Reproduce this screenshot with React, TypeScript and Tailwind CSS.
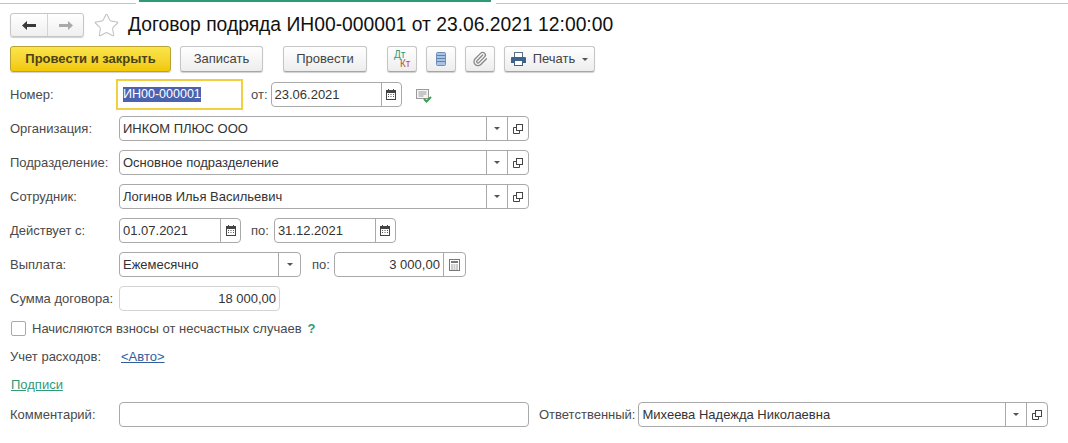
import { Star, Paperclip } from "lucide-react";
import type { ReactNode } from "react";

const labelCls = "text-[#4a4a4a] text-[13px] whitespace-nowrap";
const fieldBorder = "border border-[#a9a9a9] rounded-[4px] bg-white";

function Caret() {
  return <span className="w-0 h-0 border-x-[3px] border-x-transparent border-t-[3px] border-t-[#555]" />;
}

function OpenIcon() {
  return (
    <svg width="12" height="12" viewBox="0 0 12 12" fill="none" stroke="#444" strokeWidth="1">
      <rect x="4.5" y="1.5" width="6" height="6" />
      <path d="M4.5 4.5H1.5V10.5H7.5V7.5" />
    </svg>
  );
}

function CalendarIcon() {
  return (
    <svg width="10" height="11" viewBox="0 0 10 11">
      <rect x="0.5" y="1.5" width="9" height="9" fill="#fff" stroke="#444" />
      <rect x="0" y="1" width="10" height="3" fill="#444" />
      <rect x="2" y="0" width="1" height="2" fill="#444" />
      <rect x="7" y="0" width="1" height="2" fill="#444" />
      <path d="M2 5.5h1M4.5 5.5h1M7 5.5h1M2 7.5h1M4.5 7.5h1M7 7.5h1" stroke="#555" />
    </svg>
  );
}

function CalcIcon() {
  return (
    <svg width="11" height="12" viewBox="0 0 11 12">
      <rect x="0.5" y="0.5" width="10" height="11" fill="#fff" stroke="#777" />
      <rect x="2" y="2" width="7" height="2" fill="#777" />
      <path d="M2 6h2M4.5 6h2M7 6h2M2 8h2M4.5 8h2M7 8h2M2 10h2M4.5 10h2M7 10h2" stroke="#999" />
    </svg>
  );
}

function PrinterIcon() {
  return (
    <svg width="15" height="14" viewBox="0 0 15 14">
      <rect x="3.5" y="0.5" width="8" height="5" fill="#fff" stroke="#5b6f86" />
      <path d="M1 5h13a1 1 0 0 1 1 1v5h-3V8H3v3H0V6a1 1 0 0 1 1-1z" fill="#3f6288" />
      <rect x="3.5" y="8.5" width="8" height="5" fill="#fff" stroke="#3f6288" />
    </svg>
  );
}

function Arrow({ color, flip }: { color: string; flip?: boolean }) {
  return (
    <svg width="14" height="9" viewBox="0 0 14 9" className={flip ? "-scale-x-100" : ""}>
      <path d="M0 4.5 5 0v3h9v3H5v3z" fill={color} />
    </svg>
  );
}

function Field({ width, value, right, buttons, light, btn = "w-[21px]" }: { width: string; value: string; right?: boolean; buttons?: ReactNode[]; light?: boolean; btn?: string }) {
  return (
    <div className={`${width} h-[25px] flex shrink-0 ${fieldBorder} ${light ? "border-[#d4d4d4]" : ""}`}>
      <div className={`flex-1 min-w-0 px-[3px] leading-[23px] text-[13px] text-[#333] whitespace-pre ${right ? "text-right" : ""}`}>{value}</div>
      {buttons?.map((b, i) => (
        <div key={i} className={`${btn} flex items-center justify-center border-l border-[#a9a9a9]`}>
          {b}
        </div>
      ))}
    </div>
  );
}

function ToolButton({ children, className }: { children: ReactNode; className: string }) {
  return (
    <div className={`h-[26px] flex items-center justify-center border border-[#c6c6c6] border-b-[#a5a5a5] rounded-[3px] bg-gradient-to-b from-white to-[#ededed] text-[13px] text-[#444] shadow-[0_1px_1px_#d0d0d0] ${className}`}>
      {children}
    </div>
  );
}

function Row({ label, children, className }: { label: string; children: ReactNode; className: string }) {
  return (
    <div className={`flex items-center pl-[10px] ${className}`}>
      <div className={`${labelCls} w-[109px] shrink-0`}>{label}</div>
      {children}
    </div>
  );
}

export default function App() {
  const combo = [<Caret key="c" />, <OpenIcon key="o" />];

  return (
    <div className="w-[1068px] h-[443px] overflow-hidden bg-white font-['Liberation_Sans',Arial,sans-serif]">
      <div className="h-[4px] flex">
        <div className="w-[136px] border-b border-[#c4c4c4]" />
        <div className="w-[352px] h-[2px] bg-[#2f9a78] ml-[3px]" />
        <div className="flex-1 border-b border-[#c4c4c4] ml-[5px]" />
      </div>

      <div className="flex items-center pl-[10px] mt-[9px] h-[24px]">
        <div className="w-[74px] h-[24px] flex border border-[#c6c6c6] rounded-[3px] bg-gradient-to-b from-white to-[#efefef] shadow-[0_1px_1px_#d0d0d0]">
          <div className="w-[37px] flex items-center justify-center border-r border-[#d4d4d4]">
            <Arrow color="#3a3a3a" />
          </div>
          <div className="flex-1 flex items-center justify-center">
            <Arrow color="#aaaaaa" flip />
          </div>
        </div>
        <Star size={27} strokeWidth={1} color="#c4c4c4" className="ml-[9px]" />
        <div className="ml-[8px] text-[19.3px] text-[#111] whitespace-nowrap">Договор подряда ИН00-000001 от 23.06.2021 12:00:00</div>
      </div>

      <div className="flex items-center pl-[10px] mt-[9px] h-[26px]">
        <div className="w-[161px] h-[26px] flex items-center justify-center rounded-[3px] border border-[#b8a233] bg-gradient-to-b from-[#fbe54a] to-[#f2c800] text-[13px] font-bold text-[#4a4216] shadow-[0_1px_1px_#d0d0d0]">
          Провести и закрыть
        </div>
        <ToolButton className="w-[83px] ml-[9px]">Записать</ToolButton>
        <ToolButton className="w-[84px] ml-[20px]">Провести</ToolButton>
        <ToolButton className="w-[30px] ml-[20px]">
          <span className="relative block w-[20px] h-[18px] text-[10px] leading-[9px]">
            <span className="absolute left-[2px] top-0 text-[#2f9a78]">Дт</span>
            <span className="absolute left-[8px] top-[9px] text-[#c0504d]">Кт</span>
          </span>
        </ToolButton>
        <ToolButton className="w-[30px] ml-[9px]">
          <svg width="10" height="14" viewBox="0 0 10 14">
            <rect x="0.5" y="0.5" width="9" height="13" rx="1" fill="#a9c3e4" stroke="#6f8fb8" />
            <path d="M1 3.5h8M1 6.5h8M1 9.5h8" stroke="#5f81ad" />
          </svg>
        </ToolButton>
        <ToolButton className="w-[30px] ml-[9px]">
          <Paperclip size={16} strokeWidth={2} color="#8a8a8a" />
        </ToolButton>
        <ToolButton className="w-[91px] ml-[9px] gap-[7px]">
          <PrinterIcon />
          <span>Печать</span>
          <Caret />
        </ToolButton>
      </div>

      <Row label="Номер:" className="mt-[7px] h-[31px]">
        <div className="-ml-[3px] w-[127px] h-[31px] border-[2px] border-[#f0d040] px-[5px] flex items-center">
          <span className="bg-[#4a62b0] text-white text-[12.5px] leading-[15px]">ИН00-000001</span>
        </div>
        <span className={`${labelCls} ml-[8px]`}>от:</span>
        <Field width="w-[131px] ml-[3px]" value="23.06.2021" btn="w-[20px]" buttons={[<CalendarIcon key="c" />]} />
        <svg width="16" height="14" viewBox="0 0 16 14" className="ml-[14px] mt-[2px]">
          <rect x="0.5" y="0.5" width="12" height="9" fill="#f4f4f4" stroke="#9a9a9a" />
          <path d="M2.5 3h8M2.5 5h8M2.5 7h5" stroke="#9a9a9a" />
          <path d="M8 10l2.5 2.5L15 8" fill="none" stroke="#3f9e4d" strokeWidth="2" />
        </svg>
      </Row>

      <Row label="Организация:" className="mt-[6px] h-[25px]">
        <Field width="w-[410px]" value="ИНКОМ ПЛЮС ООО" buttons={combo} />
      </Row>
      <Row label="Подразделение:" className="mt-[9px] h-[25px]">
        <Field width="w-[410px]" value="Основное подразделение" buttons={combo} />
      </Row>
      <Row label="Сотрудник:" className="mt-[9px] h-[25px]">
        <Field width="w-[410px]" value="Логинов Илья Васильевич" buttons={combo} />
      </Row>

      <Row label="Действует с:" className="mt-[9px] h-[25px]">
        <Field width="w-[122px]" value="01.07.2021" btn="w-[20px]" buttons={[<CalendarIcon key="c" />]} />
        <span className={`${labelCls} ml-[10px]`}>по:</span>
        <Field width="w-[122px] ml-[5px]" value="31.12.2021" btn="w-[20px]" buttons={[<CalendarIcon key="c" />]} />
      </Row>

      <Row label="Выплата:" className="mt-[9px] h-[25px]">
        <Field width="w-[182px]" value="Ежемесячно" btn="w-[22px]" buttons={[<Caret key="c" />]} />
        <span className={`${labelCls} ml-[11px]`}>по:</span>
        <Field width="w-[132px] ml-[4px]" value="3 000,00" right btn="w-[22px]" buttons={[<CalcIcon key="c" />]} />
      </Row>

      <Row label="Сумма договора:" className="mt-[9px] h-[25px]">
        <Field width="w-[161px]" value="18 000,00" right light />
      </Row>

      <div className="flex items-center pl-[11px] mt-[5px] h-[25px]">
        <span className="w-[15px] h-[15px] border border-[#a9a9a9] rounded-[2px] bg-white" />
        <span className={`${labelCls} ml-[6px]`}>Начисляются взносы от несчастных случаев</span>
        <span className="ml-[6px] text-[13px] font-bold text-[#2f9a78]">?</span>
      </div>

      <Row label="Учет расходов:" className="mt-[3px] h-[25px]">
        <span className="ml-[2px] text-[13px] text-[#2f5d9e] underline">&lt;Авто&gt;</span>
      </Row>

      <div className="pl-[11px] mt-[3px] h-[25px] leading-[25px] text-[13px] text-[#2f9a78] underline">Подписи</div>

      <Row label="Комментарий:" className="mt-[5px] h-[25px]">
        <Field width="w-[410px]" value="" />
        <span className={`${labelCls} ml-[10px]`}>Ответственный:</span>
        <Field width="w-[410px] ml-[3px]" value="Михеева Надежда Николаевна" buttons={combo} />
      </Row>
    </div>
  );
}
